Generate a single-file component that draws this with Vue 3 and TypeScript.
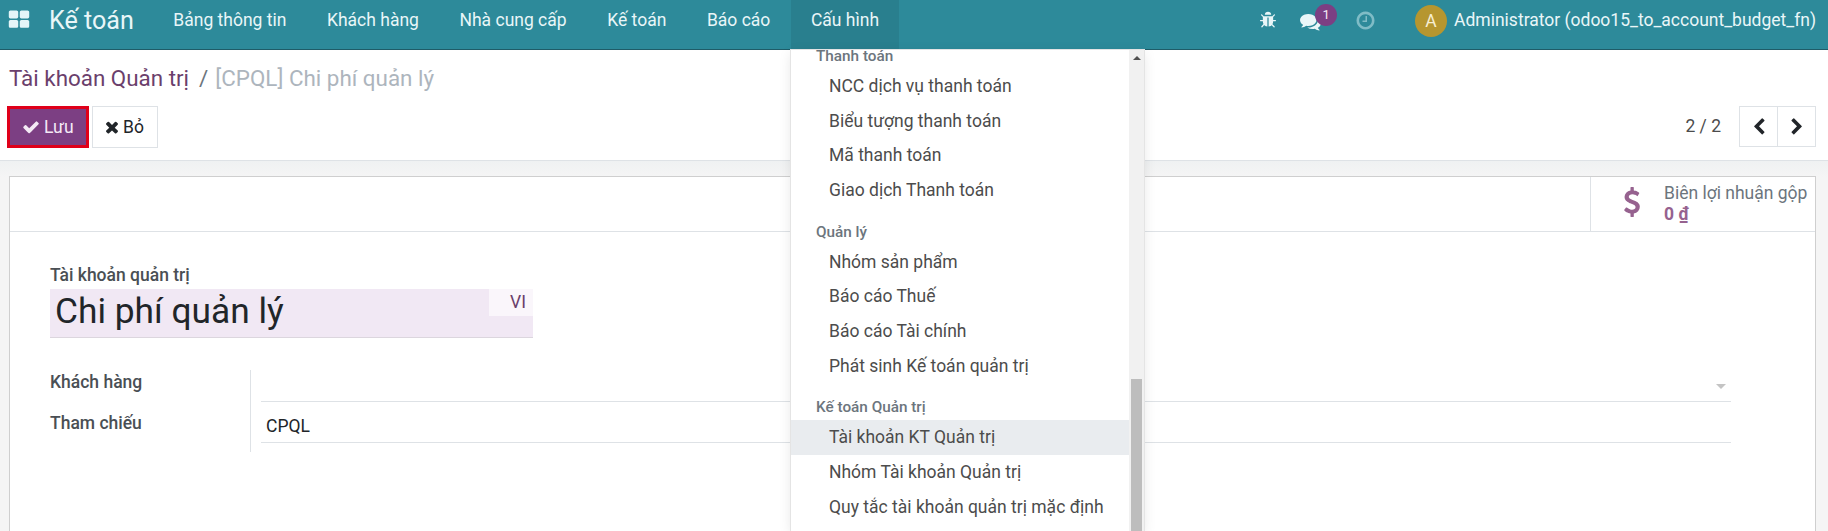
<template>
  <div class="page">
    <header class="navbar">
      <svg class="apps" viewBox="0 0 1792 1792"><path :d="icons.grid" /></svg>
      <span class="brand">Kế toán</span>
      <nav class="menu">
        <a v-for="item in navItems" :key="item" class="menu-item" :class="{ active: item === 'Cấu hình' }">{{ item }}</a>
      </nav>
      <div class="systray">
        <svg class="tray-bug" viewBox="0 0 1792 1792"><path :d="icons.bug" /></svg>
        <span class="tray-chat">
          <svg viewBox="0 0 1792 1792"><path :d="icons.comments" /></svg>
          <span class="badge">1</span>
        </span>
        <svg class="tray-clock" viewBox="0 0 1792 1792"><path :d="icons.clock" /></svg>
        <span class="avatar">A</span>
        <span class="username">Administrator (odoo15_to_account_budget_fn)</span>
      </div>
    </header>

    <section class="control-panel">
      <div class="breadcrumb">
        <a>Tài khoản Quản trị</a>
        <span class="sep">/</span>
        <span class="current">[CPQL] Chi phí quản lý</span>
      </div>
      <div class="cp-row">
        <div class="buttons">
          <button class="btn btn-save">
            <svg viewBox="0 0 1792 1792"><path :d="icons.check" /></svg>Lưu
          </button>
          <button class="btn btn-discard">
            <svg viewBox="0 0 1792 1792"><path :d="icons.times" /></svg>Bỏ
          </button>
        </div>
        <div class="pager">
          <span class="pager-value">2 / 2</span>
          <div class="pager-btns">
            <button><svg viewBox="0 0 1792 1792"><path :d="icons.left" /></svg></button>
            <button><svg viewBox="0 0 1792 1792"><path :d="icons.right" /></svg></button>
          </div>
        </div>
      </div>
    </section>

    <main class="content">
      <div class="sheet">
        <div class="button-box">
          <div class="stat">
            <svg viewBox="0 0 1792 1792"><path :d="icons.dollar" /></svg>
            <div class="stat-info">
              <span class="stat-label">Biên lợi nhuận gộp</span>
              <span class="stat-value">0 <u>₫</u></span>
            </div>
          </div>
        </div>
        <div class="form-body">
          <label class="title-label">Tài khoản quản trị</label>
          <div class="title-input">
            <span>Chi phí quản lý</span>
            <span class="lang">VI</span>
          </div>
          <div class="fields">
            <div class="labels">
              <label>Khách hàng</label>
              <label>Tham chiếu</label>
            </div>
            <div class="inputs">
              <div class="input"><i class="caret"></i></div>
              <div class="input">CPQL</div>
            </div>
          </div>
        </div>
      </div>
    </main>

    <div class="dropdown">
      <div class="dropdown-list">
        <template v-for="group in menuGroups" :key="group.title">
          <div class="dropdown-header">{{ group.title }}</div>
          <a
            v-for="entry in group.items"
            :key="entry"
            class="dropdown-item"
            :class="{ focus: entry === 'Tài khoản KT Quản trị' }"
          >{{ entry }}</a>
        </template>
      </div>
      <div class="scrollbar">
        <i class="arrow"></i>
        <i class="thumb"></i>
      </div>
    </div>
  </div>
</template>

<script setup lang="ts">
const navItems: string[] = [
  "Bảng thông tin",
  "Khách hàng",
  "Nhà cung cấp",
  "Kế toán",
  "Báo cáo",
  "Cấu hình",
];

interface MenuGroup {
  title: string;
  items: string[];
}

const menuGroups: MenuGroup[] = [
  {
    title: "Thanh toán",
    items: ["NCC dịch vụ thanh toán", "Biểu tượng thanh toán", "Mã thanh toán", "Giao dịch Thanh toán"],
  },
  {
    title: "Quản lý",
    items: ["Nhóm sản phẩm", "Báo cáo Thuế", "Báo cáo Tài chính", "Phát sinh Kế toán quản trị"],
  },
  {
    title: "Kế toán Quản trị",
    items: ["Tài khoản KT Quản trị", "Nhóm Tài khoản Quản trị", "Quy tắc tài khoản quản trị mặc định"],
  },
];

const icons = {
  grid: "M832 1024v384q0 52-38 90t-90 38h-512q-52 0-90-38t-38-90v-384q0-52 38-90t90-38h512q52 0 90 38t38 90zm0-768v384q0 52-38 90t-90 38h-512q-52 0-90-38t-38-90v-384q0-52 38-90t90-38h512q52 0 90 38t38 90zm896 768v384q0 52-38 90t-90 38h-512q-52 0-90-38t-38-90v-384q0-52 38-90t90-38h512q52 0 90 38t38 90zm0-768v384q0 52-38 90t-90 38h-512q-52 0-90-38t-38-90v-384q0-52 38-90t90-38h512q52 0 90 38t38 90z",
  bug: "M1696 960q0 26-19 45t-45 19h-224q0 171-67 290l208 209q19 19 19 45t-19 45q-18 19-45 19t-45-19l-198-197q-5 5-15 13t-42 28.500-65 36.500-82 29-97 13v-896h-128v896q-51 0-101.500-13.500t-87-33-66-39-43.500-32.500l-15-14-183 207q-20 21-48 21-24 0-43-16-19-18-20.500-44.500t15.500-46.500l202-227q-58-114-58-274h-224q-26 0-45-19t-19-45 19-45 45-19h224v-294l-173-173q-19-19-19-45t19-45 45-19 45 19l173 173h844l173-173q19-19 45-19t45 19 19 45-19 45l-173 173v294h224q26 0 45 19t19 45zm-480-576h-640q0-133 93.500-226.500t226.500-93.500 226.500 93.500 93.500 226.500z",
  comments: "M1408 768q0 139-94 257t-256.500 186.500-353.500 68.500q-86 0-176-16-124 88-278 128-36 9-86 16h-3q-11 0-20.500-8t-11.500-21q-1-3-1-6.500t.5-6.500 2-6l2.500-5 3.500-5.500 4-5 4.500-5 4-4.500q5-6 23-25t26-29.500 22.500-29 25-38.500 20.500-44q-124-72-195-177t-71-224q0-139 94-257t256.500-186.500 353.500-68.500 353.500 68.500 256.500 186.500 94 257zm384 256q0 120-71 224.500t-195 176.500q10 24 20.500 44t25 38.500 22.500 29 26 29.500 23 25q1 1 4 4.500t4.500 5 4 5 3.500 5.500l2.500 5 2 6 .5 6.500-1 6.500q-3 14-13 22t-22 7q-50-7-86-16-154-40-278-128-90 16-176 16-271 0-472-132 58 4 88 4 161 0 309-45t264-129q125-92 192-212t67-254q0-77-23-152 129 71 204 178t75 230z",
  clock: "M1024 544v448q0 14-9 23t-23 9h-320q-14 0-23-9t-9-23v-64q0-14 9-23t23-9h224v-352q0-14 9-23t23-9h64q14 0 23 9t9 23zm416 352q0-148-73-273t-198-198-273-73-273 73-198 198-73 273 73 273 198 198 273 73 273-73 198-198 73-273zm224 0q0 209-103 385.500t-279.500 279.500-385.500 103-385.500-103-279.500-279.500-103-385.500 103-385.500 279.500-279.500 385.500-103 385.500 103 279.500 279.500 103 385.500z",
  check: "M1671 566q0 40-28 68l-724 724-136 136q-28 28-68 28t-68-28l-136-136-362-362q-28-28-28-68t28-68l136-136q28-28 68-28t68 28l294 295 656-657q28-28 68-28t68 28l136 136q28 28 28 68z",
  times: "M1490 1322q0 40-28 68l-136 136q-28 28-68 28t-68-28l-294-294-294 294q-28 28-68 28t-68-28l-136-136q-28-28-28-68t28-68l294-294-294-294q-28-28-28-68t28-68l136-136q28-28 68-28t68 28l294 294 294-294q28-28 68-28t68 28l136 136q28 28 28 68t-28 68l-294 294 294 294q28 28 28 68z",
  left: "M1427 301l-531 531 531 531q19 19 19 45t-19 45l-166 166q-19 19-45 19t-45-19l-742-742q-19-19-19-45t19-45l742-742q19-19 45-19t45 19l166 166q19 19 19 45t-19 45z",
  right: "M1363 877l-742 742q-19 19-45 19t-45-19l-166-166q-19-19-19-45t19-45l531-531-531-531q-19-19-19-45t19-45l166-166q19-19 45-19t45 19l742 742q19 19 19 45t-19 45z",
  dollar: "M1362 1185q0 153-99.500 263.500t-258.500 136.500v175q0 14-9 23t-23 9h-135q-13 0-22.500-9.500t-9.500-22.500v-175q-66-9-127.500-31t-101.500-44.500-74-48-46.500-37.500-17.500-18q-17-21-2-41l103-135q7-10 23-12 15-2 24 9l2 2q113 99 243 125 37 8 74 8 81 0 142.500-43t61.500-122q0-28-15-53t-33.500-42-58.500-37.500-66-32-80-32.500q-39-16-61.500-25t-61.500-26.500-62.500-31-56.500-35.500-53.500-42.500-43.500-49-35.500-58-21-66.500-8.500-78q0-138 98-242t255-134v-180q0-13 9.500-22.500t22.500-9.500h135q14 0 23 9t9 23v176q57 6 110.500 23t87 33.500 63.500 37.500 39 29 15 14q17 18 5 38l-81 146q-8 15-23 16-14 3-27-7-3-3-14.500-12t-39-26.500-58.500-32-74.500-26-85.500-11.500q-95 0-155 43t-60 111q0 26 8.500 48t29.500 41.500 39.500 33 56 31 60.500 27 70 27.500q53 20 81 31.500t76 35 75.500 42.500 62 50 53 63.500 31.500 76.500 13 94z",
};
</script>

<style>
html,
body {
  margin: 0;
  overflow: hidden;
}
</style>

<style scoped>
.page {
  position: relative;
  display: flex;
  flex-direction: column;
  width: 1828px;
  height: 531px;
  overflow: hidden;
  background: #fff;
  font-family: Roboto, "Noto Sans", sans-serif;
  font-size: 17.5px;
  color: #4c4c4c;
}
svg {
  fill: currentColor;
  display: block;
}

/* top bar */
.navbar {
  display: flex;
  flex: none;
  height: 49px;
  padding-left: 8px;
  background: #2d8a9a;
  border-bottom: 1px solid #1f5c68;
  color: #e9f6f8;
  line-height: 41px;
}
.apps {
  width: 22px;
  height: 22px;
  margin: 9px 0 0;
  color: #e4f5f8;
}
.brand {
  margin-left: 19px;
  font-size: 25.1px;
  width: 104px;
}
.menu {
  display: flex;
}
.menu-item {
  padding: 0 20.3px;
}
.menu-item.active {
  background: #297f8e;
}
.systray {
  display: flex;
  margin-left: auto;
  padding-right: 12px;
  position: relative;
}
.tray-bug {
  width: 18px;
  height: 18px;
  margin-top: 11px;
}
.tray-chat {
  position: relative;
  width: 20px;
  margin-left: 23px;
}
.tray-chat svg {
  width: 21px;
  height: 21px;
  margin-top: 11px;
}
.badge {
  position: absolute;
  top: 4px;
  left: 15px;
  width: 22px;
  height: 22px;
  border-radius: 50%;
  background: #7c3f83;
  color: #f5e9f6;
  font-size: 13px;
  line-height: 21px;
  text-align: center;
}
.tray-clock {
  width: 21px;
  height: 21px;
  margin: 10px 0 0 35px;
  color: #7fbcc6;
}
.avatar {
  width: 32px;
  height: 32px;
  margin: 5px 0 0 39px;
  border-radius: 50%;
  background: #b6962f;
  color: #f6eed2;
  line-height: 32px;
  text-align: center;
}
.username {
  margin-left: 7px;
}

/* control panel */
.control-panel {
  flex: none;
  height: 111px;
  box-sizing: border-box;
  padding: 13px 12px 0 7px;
  border-bottom: 1px solid #dee2e6;
}
.breadcrumb {
  display: flex;
  height: 30px;
  padding-left: 2px;
  font-size: 22.4px;
  line-height: 30px;
  color: #6b3f6c;
}
.sep {
  margin: 0 7px 0 10px;
  color: #6c757d;
}
.current {
  color: #adb5bd;
}
.cp-row {
  display: flex;
  justify-content: space-between;
  margin-top: 13px;
}
.buttons {
  display: flex;
  gap: 3px;
}
.btn {
  display: flex;
  align-items: center;
  height: 42px;
  box-sizing: border-box;
  font: inherit;
  cursor: pointer;
}
.btn svg {
  width: 18px;
  height: 18px;
  margin-right: 4px;
}
.btn-save {
  width: 82px;
  padding: 0 0 0 12px;
  background: #7c3f83;
  border: 3px solid #e0001a;
  color: #f4e9f5;
}
.btn-discard {
  width: 66px;
  padding: 0 0 0 10px;
  background: #fff;
  border: 1px solid #dee2e6;
  color: #212529;
}
.btn-discard svg {
  margin-right: 2px;
}
.pager {
  display: flex;
  align-items: center;
  color: #4c4c4c;
}
.pager-value {
  margin-right: 18px;
  margin-top: -2px;
}
.pager-btns {
  display: flex;
  height: 41px;
  margin-top: -1px;
}
.pager-btns button {
  width: 39px;
  padding: 0;
  display: flex;
  align-items: center;
  justify-content: center;
  background: #fff;
  border: 1px solid #dee2e6;
  color: #212529;
}
.pager-btns button + button {
  margin-left: -1px;
}
.pager-btns svg {
  width: 18px;
  height: 18px;
}

/* form */
.content {
  flex: 1;
  min-height: 0;
  padding: 15px 12px 0 9px;
  background: linear-gradient(#eff1f2, #f5f5f5 16px);
}
.sheet {
  height: 400px;
  background: #fff;
  border: 1px solid #cfcfcf;
  border-bottom: 0;
}
.button-box {
  display: flex;
  justify-content: flex-end;
  height: 54px;
  border-bottom: 1px solid #dee2e6;
}
.stat {
  display: flex;
  width: 225px;
  box-sizing: border-box;
  padding: 6px 0 0 32px;
  border-left: 1px solid #dee2e6;
  color: #96628f;
}
.stat svg {
  width: 30px;
  height: 34px;
  margin: 2px 0 0 -6px;
}
.stat-info {
  display: flex;
  flex-direction: column;
  margin-left: 17px;
  line-height: 21px;
}
.stat-label {
  color: #6c757d;
}
.stat-value {
  font-weight: 700;
}
.form-body {
  padding: 32px 0 0 40px;
}
.title-label,
.labels label {
  display: block;
  font-weight: 500;
  color: #4a4f54;
}
.title-label {
  line-height: 22px;
}
.title-input {
  position: relative;
  width: 483px;
  height: 49px;
  margin-top: 3px;
  padding-left: 5px;
  box-sizing: border-box;
  background: #f1e8f4;
  border-bottom: 1px solid #dcd6de;
  font-size: 35.3px;
  line-height: 44px;
  color: #212529;
}
.lang {
  position: absolute;
  top: 0;
  right: 0;
  width: 44px;
  height: 27px;
  box-sizing: border-box;
  padding-right: 7px;
  background: #faf6fb;
  color: #6b3f6c;
  font-size: 17.5px;
  line-height: 26px;
  text-align: right;
}
.fields {
  display: flex;
  margin-top: 32px;
}
.labels {
  width: 200px;
  flex: none;
  border-right: 1px solid #dee2e6;
}
.labels label {
  height: 41px;
  line-height: 24px;
}
.inputs {
  width: 1470px;
  margin-left: 10px;
  padding-bottom: 9px;
}
.input {
  position: relative;
  height: 32px;
  border-bottom: 1px solid #dee2e6;
  padding-left: 5px;
  box-sizing: border-box;
  color: #212529;
  line-height: 30px;
}
.input + .input {
  height: 41px;
  padding-top: 9px;
}
.caret {
  position: absolute;
  right: 5px;
  top: 14px;
  border: 5px solid transparent;
  border-top: 5px solid #c4c4c4;
  border-bottom: 0;
}

/* open menu */
.dropdown {
  position: absolute;
  top: 50px;
  left: 791px;
  width: 353px;
  height: 481px;
  display: flex;
  background: #fff;
  box-shadow: 0 0 0 1px #e4e4e4, 0 3px 12px rgba(0, 0, 0, 0.1);
  overflow: hidden;
}
.dropdown-list {
  flex: 1;
  margin-top: -7px;
}
.dropdown-header {
  height: 26px;
  margin-top: 11px;
  padding-left: 25px;
  font-size: 15.3px;
  font-weight: 500;
  line-height: 26px;
  color: #6c757d;
}
.dropdown-header:first-child {
  margin-top: 0;
}
.dropdown-item {
  display: block;
  height: 34.67px;
  padding-left: 38px;
  line-height: 34.67px;
  color: #4c4c4c;
}
.dropdown-item.focus {
  background: #e9ecef;
}
.scrollbar {
  position: relative;
  width: 15px;
  flex: none;
  background: #f1f1f1;
}
.arrow {
  position: absolute;
  top: 6px;
  left: 4px;
  border: 4px solid transparent;
  border-bottom: 4px solid #505050;
  border-top: 0;
}
.thumb {
  position: absolute;
  top: 329px;
  bottom: 0;
  left: 2px;
  width: 11px;
  background: #bdbdbd;
}
</style>
